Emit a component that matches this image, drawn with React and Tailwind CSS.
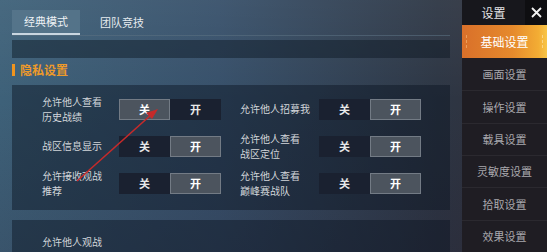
import React from "react";

const font = { fontFamily: '"Noto Sans CJK SC", "Noto Sans", sans-serif' };

function Toggle({ on }) {
  const sel = "bg-[#4c545e] border border-[#737b85] text-white";
  const uns = "bg-[#1a2130] border border-transparent text-[#e8e8e8]";
  return (
    <div className="flex h-[21px] w-[102px] text-[11px] font-bold">
      <div className={`flex-1 flex items-center justify-center ${on ? uns : sel}`}>关</div>
      <div className={`flex-1 flex items-center justify-center ${on ? sel : uns}`}>开</div>
    </div>
  );
}

function Label({ children }) {
  return (
    <div className="text-[10px] leading-[14.5px] text-[#d2d6da] flex items-center">{children}</div>
  );
}

const sideItems = ["画面设置", "操作设置", "载具设置", "灵敏度设置", "拾取设置", "效果设置"];

export default function App() {
  return (
    <div
      style={font}
      className="relative w-[547px] h-[252px] overflow-hidden flex bg-[linear-gradient(90deg,#3e6179_0%,#37506a_40%,#2d3644_80%,#33303a_100%)]"
    >
      <div className="absolute inset-0 bg-[linear-gradient(180deg,rgba(255,255,255,0.05)_0%,rgba(0,0,0,0)_40%,rgba(30,10,30,0.15)_100%)]" />
      {/* main */}
      <div className="relative w-[462px] pl-[12px] pr-[12px] flex flex-col">
        <div className="flex items-end h-[36px] border-b border-[#5a6f80]/60">
          <div className="w-[68px] h-[25px] flex items-center justify-center bg-[#5b7a90]/70 border-b-2 border-[#c9d6e0] text-[11px] text-[#eef2f5]">
            经典模式
          </div>
          <div className="ml-[20px] h-[25px] flex items-center text-[11px] text-[#e6ebef]">团队竞技</div>
        </div>
        <div className="mt-[4px] h-[18px] bg-[#0c1622]/45" />
        <div className="mt-[6px] flex items-center h-[12px]">
          <div className="w-[3px] h-[12px] bg-[#f0941e]" />
          <div className="ml-[5px] text-[12px] leading-[12px] font-bold text-[#ee9a2a]">隐私设置</div>
        </div>
        <div className="mt-[9px] bg-[#0c1522]/45 pl-[30px] pt-[14px] pb-[16px]">
          <div className="grid grid-cols-[77px_121px_79px_102px] grid-rows-[21px_21px_21px] gap-y-[16px]">
            <Label>允许他人查看<br />历史战绩</Label>
            <Toggle on={false} />
            <Label>允许他人招募我</Label>
            <Toggle on={true} />

            <Label>战区信息显示</Label>
            <Toggle on={true} />
            <Label>允许他人查看<br />战区定位</Label>
            <Toggle on={true} />

            <Label>允许接收观战<br />推荐</Label>
            <Toggle on={true} />
            <Label>允许他人查看<br />巅峰赛战队</Label>
            <Toggle on={true} />
          </div>
        </div>
        <div className="mt-[10px] flex-1 bg-[#0c1522]/45 pl-[30px] pt-[15px]">
          <div className="text-[10px] leading-[14.5px] text-[#d2d6da]">允许他人观战</div>
        </div>
      </div>

      {/* sidebar */}
      <div className="relative w-[85px] flex flex-col bg-[#1f1d23]">
        <div className="flex h-[26px]">
          <div className="flex-1 flex items-center justify-center bg-[#17171c] text-[12px] text-[#e4e4e6]">设置</div>
          <div className="w-[22px] flex items-center justify-center bg-[#0e0e11]">
            <svg width="13" height="13" viewBox="0 0 13 13">
              <path d="M2 2 L11 11 M11 2 L2 11" stroke="#f2f2f2" strokeWidth="1.8" />
            </svg>
          </div>
        </div>
        <div className="relative h-[33px] flex items-center justify-center bg-[linear-gradient(90deg,#d9702a_0%,#e68a2c_60%,#f3ad34_90%,#f8c548_100%)] text-[12px] text-white">
          <div className="absolute left-[4px] top-[10px] h-[13px] border-l border-dashed border-[#f4b070]/70" />
          <div className="absolute right-[4px] top-[10px] h-[13px] border-l border-dashed border-[#fde0a0]/70" />
          基础设置
        </div>
        {sideItems.map((t, i) => (
          <div
            key={t}
            className={`h-[33px] flex items-center justify-center text-[11px] text-[#a9a8ad] ${i > 0 ? "border-t border-[#2b292f]" : ""}`}
          >
            {t}
          </div>
        ))}
      </div>

      {/* red arrow annotation */}
      <svg className="absolute left-0 top-0 pointer-events-none" width="547" height="252">
        <line x1="77" y1="181" x2="152" y2="114" stroke="#c62a2a" strokeWidth="1.6" />
        <polygon points="158,109 146,113 152,119" fill="#c62a2a" />
      </svg>
    </div>
  );
}
